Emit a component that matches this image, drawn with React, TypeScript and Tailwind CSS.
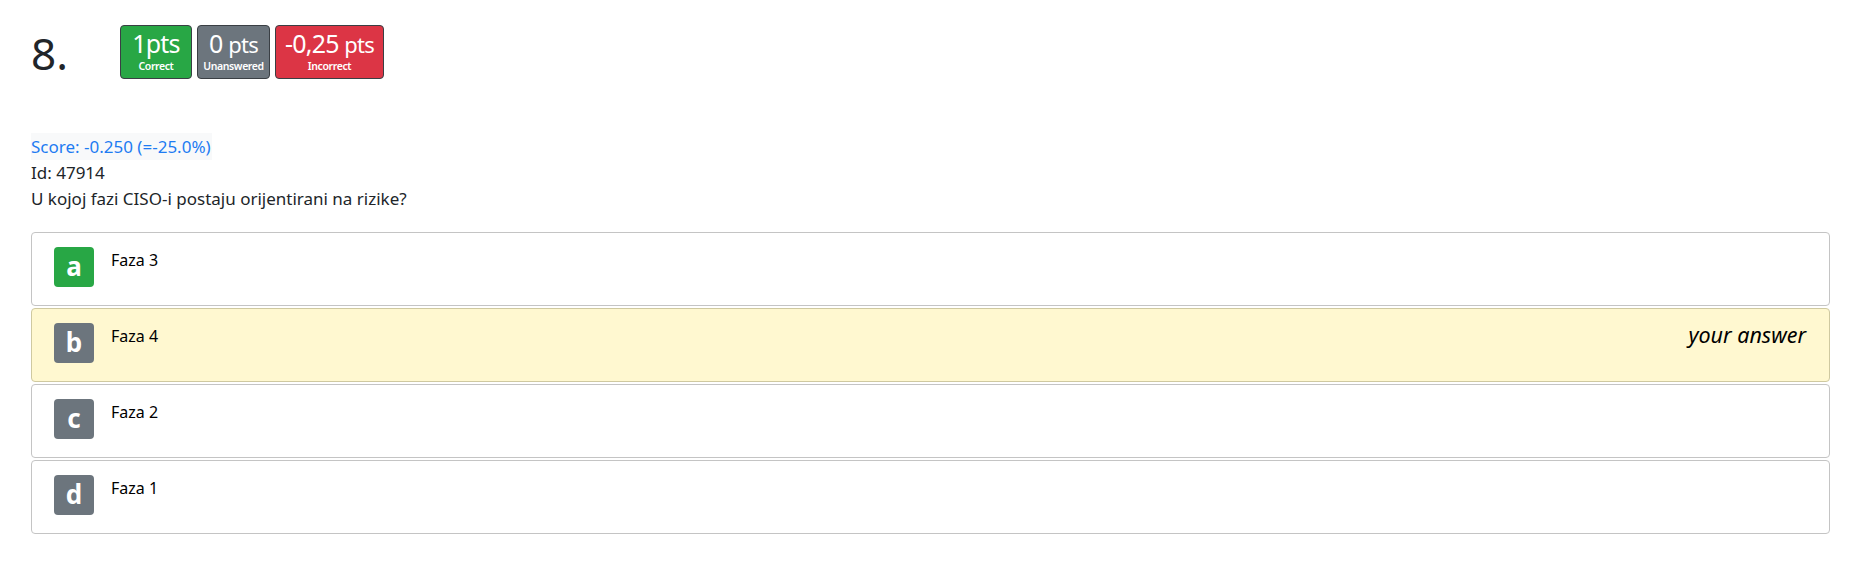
import React from 'react';

interface Answer {
  letter: string;
  text: string;
  correct?: boolean;
  chosen?: boolean;
}

const answers: Answer[] = [
  { letter: 'a', text: 'Faza 3', correct: true },
  { letter: 'b', text: 'Faza 4', chosen: true },
  { letter: 'c', text: 'Faza 2' },
  { letter: 'd', text: 'Faza 1' },
];

const font = { fontFamily: '"Noto Sans", "Open Sans", sans-serif' };

const PointsBadge: React.FC<{ top: React.ReactNode; label: string; className: string }> = ({ top, label, className }) => (
  <div className={`flex flex-col items-center justify-start h-[54px] rounded-[4px] border border-[#3a3f44] text-white ${className}`}>
    <div className="text-[25px] leading-none mt-[5px] tracking-[-0.8px]">{top}</div>
    <div className="text-[10.5px] font-semibold leading-none mt-[5px] tracking-[-0.4px]">{label}</div>
  </div>
);

export default function App() {
  return (
    <div className="bg-white min-h-[562px] pl-[31px] pr-[28px] text-[#212529]" style={font}>
      <div className="flex items-start pt-[25px]">
        <div className="w-[89px] text-[44px] leading-none mt-[6px] text-[#212529]">8.</div>
        <div className="flex gap-[5px]">
          <PointsBadge className="w-[72px] bg-[#28a745]" top={<span>1pts</span>} label="Correct" />
          <PointsBadge className="w-[73px] bg-[#6c757d]" top={<span>0 <span className="text-[22px]">pts</span></span>} label="Unanswered" />
          <PointsBadge className="w-[109px] bg-[#dc3545]" top={<span>-0,25 <span className="text-[22px]">pts</span></span>} label="Incorrect" />
        </div>
      </div>

      <div className="mt-[54px] text-[17px]">
        <div className="inline-block bg-[#f8f9fa] text-[#1e7cf2] leading-[27px] pr-[1px]">Score: -0.250 (=-25.0%)</div>
        <div className="leading-[26px]">Id: 47914</div>
        <div className="leading-[26px]">U kojoj fazi CISO-i postaju orijentirani na rizike?</div>
      </div>

      <div className="mt-[20px] flex flex-col gap-[2px]">
        {answers.map((a) => (
          <div
            key={a.letter}
            className={`flex items-start h-[74px] rounded-[4px] border pl-[22px] pt-[14px] pr-[23px] ${
              a.chosen ? 'bg-[#fff8d0] border-[#cfc9a0]' : 'bg-white border-[#c4c4c4]'
            }`}
          >
            <div
              className={`w-[40px] h-[40px] rounded-[4px] flex items-center justify-center text-white text-[26px] font-bold leading-none pb-[3px] ${
                a.correct ? 'bg-[#28a745]' : 'bg-[#6c757d]'
              }`}
            >
              {a.letter}
            </div>
            <div className="ml-[17px] text-[16px] leading-none mt-[5px] text-black">{a.text}</div>
            {a.chosen && (
              <div className="ml-auto italic text-[21.5px] leading-none mt-[1px] text-black">your answer</div>
            )}
          </div>
        ))}
      </div>
    </div>
  );
}
